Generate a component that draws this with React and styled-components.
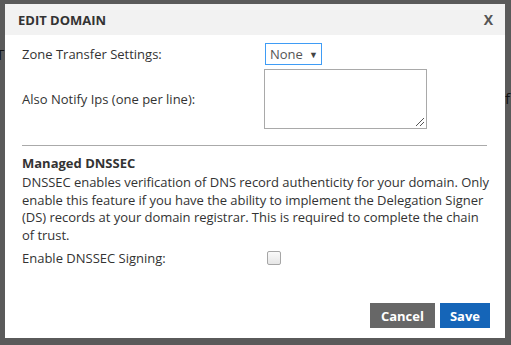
import React from "react";
import styled, { createGlobalStyle } from "styled-components";

const Global = createGlobalStyle`
  html, body { margin: 0; padding: 0; }
  body {
    background: #5a5a5a;
    font-family: "Open Sans", "Liberation Sans", sans-serif;
    width: 511px;
    height: 345px;
    overflow: hidden;
    position: relative;
  }
`;

const BehindText = styled.span`
  position: absolute;
  top: ${(p) => p.$top}px;
  left: ${(p) => p.$left}px;
  font-size: 15px;
  color: #111;
  font-family: "Open Sans", sans-serif;
`;

const Stage = styled.div`
  padding: 4px 6px 0 5px;
  position: relative;
`;

const Modal = styled.div`
  width: 500px;
  height: 334px;
  background: #fff;
  display: flex;
  flex-direction: column;
  box-sizing: border-box;
`;

const Header = styled.div`
  height: 31px;
  background: #f2f2f2;
  display: flex;
  align-items: center;
  justify-content: space-between;
  padding: 0 12px 0 13px;
`;

const Title = styled.h3`
  margin: 0;
  font-size: 13px;
  font-weight: 700;
  color: #333;
`;

const Close = styled.span`
  font-size: 14px;
  font-weight: 700;
  color: #555;
`;

const Body = styled.div`
  padding: 8px 18px 0 17px;
  flex: 1;
  display: flex;
  flex-direction: column;
`;

const Row = styled.div`
  display: grid;
  grid-template-columns: 242px auto;
  align-items: center;
  margin-top: ${(p) => p.$mt || 0}px;
  margin-bottom: ${(p) => p.$mb || 0}px;
`;

const Label = styled.label`
  font-size: 13px;
  color: #333;
`;

const Select = styled.div`
  width: 57px;
  height: 22px;
  box-sizing: border-box;
  border: 1px solid #3f9cf5;
  display: flex;
  align-items: center;
  gap: 6px;
  padding-left: 4px;
  font-size: 13px;
  color: #555;
  margin-left: 1px;
`;

const Caret = styled.span`
  font-size: 9px;
  color: #444;
`;

const TextArea = styled.div`
  width: 163px;
  height: 60px;
  box-sizing: border-box;
  border: 1px solid #a9a9a9;
  position: relative;
`;

const Grip = styled.svg`
  position: absolute;
  right: 1px;
  bottom: 1px;
`;

const Divider = styled.hr`
  margin: 16px 0 0 0;
  border: none;
  border-top: 1px solid #aaa;
  height: 0;
`;

const SectionTitle = styled.div`
  margin-top: 8px;
  font-size: 13px;
  font-weight: 700;
  color: #333;
  line-height: 18px;
`;

const Para = styled.p`
  margin: 2px -8px 0 0;
  font-size: 13px;
  letter-spacing: -0.04px;
  line-height: 17.5px;
  color: #333;
  white-space: nowrap;
`;

const Checkbox = styled.span`
  display: block;
  width: 12px;
  height: 12px;
  border: 1px solid #a6a6a6;
  border-radius: 2px;
  background: linear-gradient(#fafafa, #e6e6e6);
  margin-left: 3px;
`;

const Footer = styled.div`
  display: flex;
  justify-content: flex-end;
  gap: 5px;
  padding: 0 15px 10px 0;
`;

const Button = styled.button`
  border: none;
  height: 25px;
  padding: 0 ${(p) => p.$px}px;
  font-family: "Open Sans", sans-serif;
  font-size: 13px;
  font-weight: 700;
  color: #fff;
  background: ${(p) => (p.$primary ? "#1565b8" : "#676767")};
`;

export default function App() {
  return (
    <>
      <Global />
      <BehindText $top={44} $left={-4}>T</BehindText>
      <BehindText $top={88} $left={505}>f</BehindText>
      <Stage>
        <Modal>
          <Header>
            <Title>EDIT DOMAIN</Title>
            <Close>X</Close>
          </Header>
          <Body>
            <Row $mb={4}>
              <Label>Zone Transfer Settings:</Label>
              <Select>
                None <Caret>▼</Caret>
              </Select>
            </Row>
            <Row>
              <Label>Also Notify Ips (one per line):</Label>
              <TextArea>
                <Grip width="10" height="10" viewBox="0 0 10 10">
                  <line x1="1" y1="9" x2="9" y2="1" stroke="#555" strokeWidth="1" />
                  <line x1="5" y1="9" x2="9" y2="5" stroke="#555" strokeWidth="1" />
                </Grip>
              </TextArea>
            </Row>
            <Divider />
            <SectionTitle>Managed DNSSEC</SectionTitle>
            <Para>
              DNSSEC enables verification of DNS record authenticity for your domain. Only
              <br />
              enable this feature if you have the ability to implement the Delegation Signer
              <br />
              (DS) records at your domain registrar. This is required to complete the chain
              <br />
              of trust.
            </Para>
            <Row $mt={5}>
              <Label>Enable DNSSEC Signing:</Label>
              <Checkbox />
            </Row>
          </Body>
          <Footer>
            <Button $px={11}>Cancel</Button>
            <Button $primary $px={10}>Save</Button>
          </Footer>
        </Modal>
      </Stage>
    </>
  );
}
